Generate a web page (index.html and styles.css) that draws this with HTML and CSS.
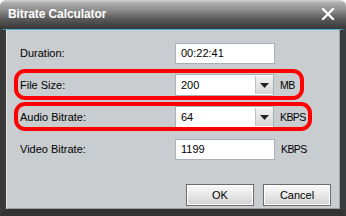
FILE: index.html
```html
<!DOCTYPE html>
<html>
<head>
<meta charset="utf-8">
<link rel="stylesheet" href="styles.css">
</head>
<body>
<div class="dialog">
  <div class="titlebar">
    <span class="title">Bitrate Calculator</span>
    <svg class="close" width="14" height="12" viewBox="0 0 14 12"><path d="M2 1 L12 11 M12 1 L2 11" stroke="#fff" stroke-width="2.4" stroke-linecap="round" fill="none"/></svg>
  </div>
  <div class="body">
    <div class="form">
      <div class="row">
        <span class="label">Duration:</span>
        <div class="field">00:22:41</div>
        <span class="unit"></span>
      </div>
      <div class="row">
        <span class="label">File Size:</span>
        <div class="combo"><span class="ctext">200</span><span class="drop"><svg width="9" height="5" viewBox="0 0 9 5"><path d="M0 0 H9 L4.5 5 Z" fill="#222"/></svg></span></div>
        <span class="unit">MB</span>
      </div>
      <div class="row">
        <span class="label">Audio Bitrate:</span>
        <div class="combo"><span class="ctext">64</span><span class="drop"><svg width="9" height="5" viewBox="0 0 9 5"><path d="M0 0 H9 L4.5 5 Z" fill="#222"/></svg></span></div>
        <span class="unit">KBPS</span>
      </div>
      <div class="row">
        <span class="label">Video Bitrate:</span>
        <div class="field">1199</div>
        <span class="unit">KBPS</span>
      </div>
    </div>
    <div class="buttons">
      <div class="btn">OK</div>
      <div class="btn">Cancel</div>
    </div>
    <div class="mark mark-file"></div>
    <div class="mark mark-audio"></div>
  </div>
</div>
</body>
</html>
```
FILE: styles.css
```css
html, body {
  margin: 0;
  padding: 0;
  background: #ffffff;
}
.dialog {
  width: 346px;
  height: 216px;
  display: flex;
  flex-direction: column;
  font-family: "Liberation Sans", Arial, sans-serif;
  font-size: 11px;
  color: #000;
}
.titlebar {
  height: 29px;
  flex: none;
  box-sizing: border-box;
  border-radius: 6px 6px 0 0;
  background: linear-gradient(to bottom, #d4d4d4 0px, #adadad 3px, #8e8e8e 10px, #5e5e5e 18px, #3a3a3a 28px);
  display: flex;
  align-items: center;
  justify-content: space-between;
  padding: 0 11px 2px 8px;
}
.title {
  color: #fff;
  font-weight: bold;
  font-size: 12px;
  letter-spacing: -0.1px;
}
.close {
  display: block;
}
.body {
  flex: 1;
  position: relative;
  background: #c9cdd0;
  border-left: 6px solid #3a3a3a;
  border-right: 6px solid #3a3a3a;
  border-bottom: 7px solid #333333;
  border-top: 1px solid #4fb2d6;
  box-shadow: inset 1px 0 0 #e6e8ea, inset -1px 0 0 #9a9ea2, inset 0 -1px 0 #9a9ea2;
  display: flex;
  flex-direction: column;
  padding: 12px 9px 3px 14px;
}
.form {
  display: flex;
  flex-direction: column;
  gap: 10px;
}
.row {
  display: flex;
  align-items: center;
  height: 22px;
}
.label {
  width: 155px;
}
.field {
  width: 100px;
  height: 21px;
  box-sizing: border-box;
  background: #fff;
  border: 1px solid #a8b0b8;
  padding: 0 5px;
  line-height: 19px;
}
.combo {
  width: 99px;
  height: 22px;
  box-sizing: border-box;
  background: #fff;
  border: 1px solid #a8b0b8;
  display: flex;
}
.ctext {
  flex: 1;
  padding: 0 5px;
  line-height: 20px;
}
.drop {
  width: 17px;
  margin: 1px 0 1px 0;
  background: linear-gradient(to bottom, #f2f2f2, #d6d6d6);
  border-left: 1px solid #c0c4c8;
  display: flex;
  align-items: center;
  justify-content: center;
}
.unit {
  margin-left: 6px;
  font-size: 10.5px;
  letter-spacing: -0.6px;
}
.buttons {
  margin-top: auto;
  display: flex;
  justify-content: flex-end;
  gap: 9px;
}
.btn {
  width: 68px;
  height: 22px;
  box-sizing: border-box;
  border: 1px solid #6c6c6c;
  background: linear-gradient(to bottom, #fafafa, #e4e4e4 60%, #d2d2d2);
  box-shadow: inset 0 0 0 1px #ffffff;
  display: flex;
  align-items: center;
  justify-content: center;
}
.mark {
  position: absolute;
  border: 4px solid #ff0000;
  border-radius: 11px;
  box-sizing: border-box;
}
.mark-file {
  left: 8px;
  top: 39px;
  width: 290px;
  height: 31px;
}
.mark-audio {
  left: 8px;
  top: 72px;
  width: 298px;
  height: 29px;
}
```
